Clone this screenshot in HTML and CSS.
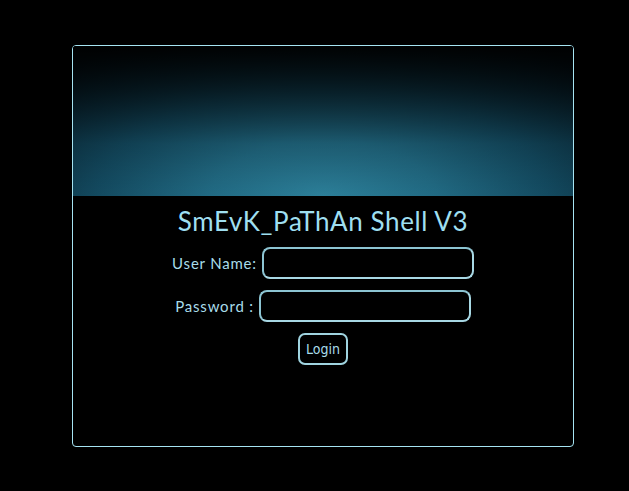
FILE: index.html
```html
<!DOCTYPE html>
<html>
<head>
<meta charset="utf-8">
<link rel="stylesheet" href="styles.css">
</head>
<body>
<div class="box">
  <div class="banner"></div>
  <h1 class="title">SmEvK_PaThAn Shell V3</h1>
  <form class="form">
    <div class="row"><label class="lbl">User Name:</label><input class="inp inp-user" type="text"></div>
    <div class="row"><label class="lbl">Password :</label><input class="inp" type="password"></div>
    <div class="row"><button class="btn" type="button">Login</button></div>
  </form>
</div>
</body>
</html>
```

FILE: styles.css
```css
html, body {
  margin: 0;
  background: #000;
}
body {
  padding: 45px 55px 0 72px;
  font-family: "Lato", "DejaVu Sans", sans-serif;
}
.box {
  width: 500px;
  height: 400px;
  border: 1px solid #a6e4f2;
  border-radius: 4px;
  overflow: hidden;
  background: #000;
}
.banner {
  height: 150px;
  background:
    linear-gradient(to bottom, rgba(0,0,0,0.95) 0%, rgba(0,0,0,0.6) 30%, rgba(0,0,0,0.15) 65%, rgba(0,0,0,0) 100%),
    radial-gradient(ellipse 75% 120% at 50% 100%, #2c7f99 0%, #216a83 30%, #134a60 60%, #0a2c3b 85%, #051822 100%);
}
.title {
  margin: 10px 0 0;
  text-align: center;
  font-weight: normal;
  font-size: 26px;
  line-height: 30px;
  color: #9fdff0;
  letter-spacing: 0.6px;
}
.form {
  display: flex;
  flex-direction: column;
  align-items: center;
  gap: 11px;
  margin-top: 11px;
}
.row {
  display: flex;
  align-items: center;
  gap: 5px;
}
.lbl {
  color: #a8dcea;
  font-size: 15px;
  letter-spacing: 0.8px;
}
.inp {
  box-sizing: border-box;
  width: 212px;
  height: 32px;
  border: 2px solid #a8d8e4;
  border-top-color: #8cc4d2;
  border-left-color: #8cc4d2;
  border-radius: 8px;
  background: #000;
  color: #a8dcea;
  outline: none;
}
.btn {
  box-sizing: border-box;
  width: 50px;
  height: 32px;
  border: 2px solid #a0d4e0;
  border-radius: 7px;
  background: #000;
  color: #a8dcea;
  font-family: "DejaVu Sans", sans-serif;
  font-stretch: condensed;
  font-size: 14px;
  padding: 0;
}
```
